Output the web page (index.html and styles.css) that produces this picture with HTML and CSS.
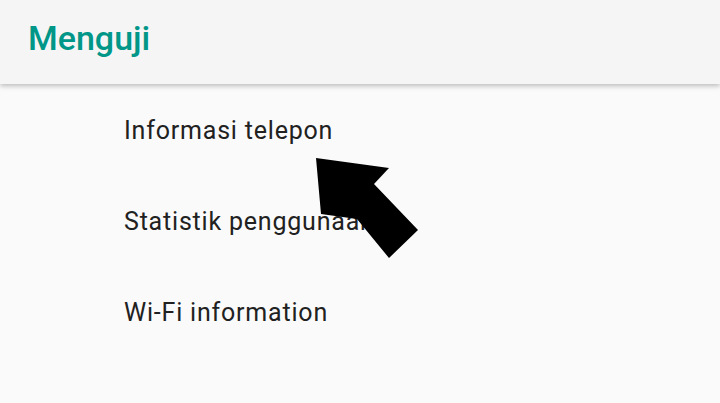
FILE: index.html
```html
<!DOCTYPE html>
<html lang="id">
<head>
  <meta charset="UTF-8">
  <title>Menguji</title>
  <link rel="stylesheet" href="styles.css">
</head>
<body>

  <!-- Toolbar -->
  <div class="toolbar">
    <div class="title">Menguji</div>
  </div>

  <!-- Settings list -->
  <div class="list">
    <div class="item">Informasi telepon</div>
    <div class="item">Statistik penggunaan</div>
    <div class="item">Wi-Fi information</div>
  </div>

  <!-- Pointer arrow drawn on top of the screen -->
  <svg class="arrow" width="720" height="403" viewBox="0 0 720 403">
    <polygon points="316,158 389,168 374,184 418,230 389,258 357,219 321,214" fill="#000"/>
  </svg>

</body>
</html>
```

FILE: styles.css
```css
* {
  box-sizing: border-box;
}

body {
  margin: 0;
  width: 720px;
  height: 403px;
  overflow: hidden;
  position: relative;
  font-family: Roboto, "Noto Sans", sans-serif;
  background-color: #fafafa;
}

/* Top toolbar */
.toolbar {
  height: 84px;
  padding: 21px 28px 29px;
  background-color: #f5f5f5;
  box-shadow: 0 2px 5px rgba(0,0,0,0.25);
  position: relative;
  z-index: 1;
}

.title {
  font-size: 34px;
  line-height: 34px;
  font-weight: 500;
  color: #009688;
}

/* List rows */
.list {
  padding-top: 1px;
}

.item {
  height: 91px;
  display: flex;
  align-items: center;
  padding-left: 124px;
  font-size: 25px;
  line-height: 24px;
  letter-spacing: 0.8px;
  color: #212121;
}

.arrow {
  position: absolute;
  left: 0;
  top: 0;
  z-index: 2;
}
```
